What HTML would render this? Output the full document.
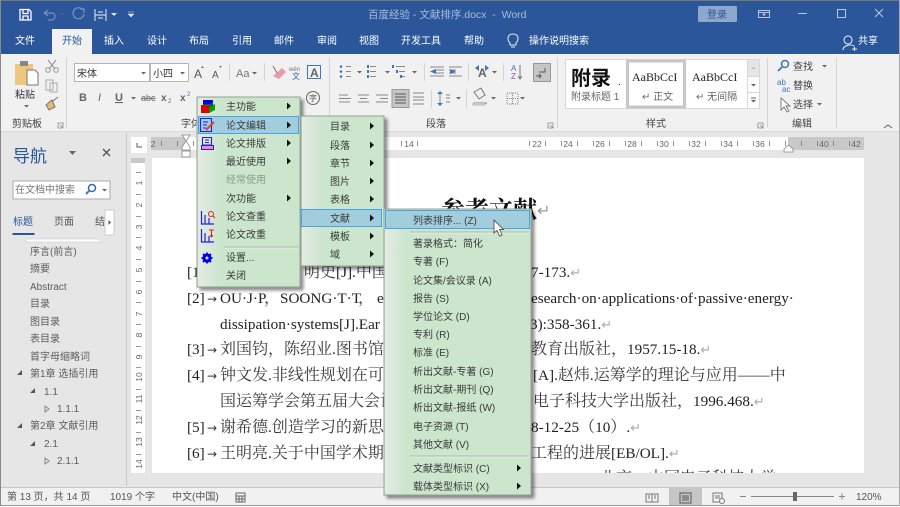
<!DOCTYPE html>
<html lang="zh"><head><meta charset="utf-8"><title>百度经验 - 文献排序.docx - Word</title>
<style>
html,body{margin:0;padding:0;background:#e6e6e6;width:900px;height:507px;overflow:hidden}
svg{display:block;position:absolute;left:0;top:0;filter:blur(.3px)}
text{font-family:"Liberation Sans","Noto Sans CJK SC",sans-serif;font-size:10px;fill:#444}
.w{fill:#fff}.t{fill:#d8e2f0}.m{fill:#3a3a3a;font-size:10px}.n{fill:#5c5c5c;font-size:10px}
.d{font-family:"Liberation Serif","Noto Serif CJK SC",serif;font-size:16px;fill:#3a3a3a}
.l{font-family:"Liberation Serif",serif;font-size:15.2px;fill:#222}
.a{font-family:"DejaVu Sans",sans-serif;font-size:12px;fill:#333}
.r{fill:#aaa;font-size:13px;font-family:"DejaVu Sans",sans-serif}
.u{font-size:8.5px;fill:#666;text-anchor:middle}
.s{font-size:10px;fill:#555}
.b{font-family:"Liberation Serif","Noto Serif CJK SC",serif;font-weight:bold;font-size:24px;fill:#111}
.ic{stroke:#666;stroke-width:1;fill:none}
</style></head><body>
<svg width="900" height="507" viewBox="0 0 900 507" xmlns="http://www.w3.org/2000/svg">
<defs>
<linearGradient id="g" x1="0" x2="1" y1="0" y2="0"><stop offset="0" stop-color="#e4ebe4"/><stop offset="1" stop-color="#cfe5d1"/></linearGradient>
<filter id="sh" x="-10%" y="-10%" width="125%" height="125%"><feDropShadow dx="3" dy="3" stdDeviation="1.6" flood-color="#000" flood-opacity=".45"/></filter>
<path id="ar" d="M0 -3.5L4 0L0 3.5Z" fill="#111"/>
<path id="dd" d="M0 0H5L2.5 2.5Z" fill="#666"/>
</defs>
<!-- base -->
<rect width="900" height="507" fill="#e6e6e6"/>
<rect x="0" y="0" width="900" height="54" fill="#2b579a"/>
<rect x="0" y="54" width="900" height="78" fill="#f1f1f1"/>
<rect x="0" y="131" width="900" height="1" fill="#dadada"/>
<!-- QAT -->
<g fill="none" stroke="#fff" stroke-width="1.3">
<path d="M20 9.5H29L31 11.5V20H20Z"/><path d="M23 10V13.500H28V10M23 20V16H28V20"/>
</g>
<path d="M44 13H52C56 13 56 19 52 20H48M44 13L48 10M44 13L48 16" fill="none" stroke="#7390bd" stroke-width="1.3"/>
<use href="#dd" x="60" y="13" opacity=".6"/>
<path d="M83 10A5.5 5.5 0 1 0 84 14M80 9H84V13" fill="none" stroke="#7390bd" stroke-width="1.3"/>
<path d="M95 9V21M106 9V21M95 15H106M98 12H103M98 18H103" fill="none" stroke="#c5d3e8" stroke-width="1.2"/>
<path d="M111 13H117L114 16Z" fill="#dfe7f2"/>
<path d="M128 12H134M128 14H134L131 17Z" fill="#dfe7f2" stroke="#dfe7f2" stroke-width=".5"/>
<text x="368" y="18" style="fill:#a8bcd9;font-size:10.5px">百度经验 - 文献排序.docx&#160; - &#160;Word</text>
<!-- title right -->
<rect x="698" y="6" width="39" height="16" rx="1" fill="#8ea7cc"/>
<text x="707" y="18" style="fill:#2b579a;font-size:10px">登录</text>
<path d="M758.5 10.5H769.5V17.5H758.5ZM758.5 12.5H769.5M764 13V16M762.5 14.5H765.5" fill="none" stroke="#b8c8e0"/>
<path d="M798 13.5H807" stroke="#b8c8e0" stroke-width="1"/>
<rect x="837.5" y="9.5" width="8" height="8" fill="none" stroke="#b8c8e0"/>
<path d="M875 9L883 17M883 9L875 17" stroke="#b8c8e0" stroke-width="1"/>
<!-- tabs -->
<rect x="52" y="29" width="40" height="25" fill="#f1f1f1"/>
<g class="t">
<text class="w" x="15" y="44">文件</text>
<text x="62" y="44" style="fill:#2b579a">开始</text>
<text class="w" x="104" y="44">插入</text>
<text class="w" x="147" y="44">设计</text>
<text class="w" x="189" y="44">布局</text>
<text class="w" x="232" y="44">引用</text>
<text class="w" x="274" y="44">邮件</text>
<text class="w" x="317" y="44">审阅</text>
<text class="w" x="359" y="44">视图</text>
<text class="w" x="401" y="44">开发工具</text>
<text class="w" x="464" y="44">帮助</text>
<text class="w" x="529" y="44">操作说明搜索</text>
<text class="w" x="858" y="44">共享</text>
</g>
<path d="M510 43C507 40 507 34 513 34C519 34 519 40 516 43V45H510ZM511 47H515" fill="none" stroke="#e8eef6" stroke-width="1"/>
<path d="M848 36a4 4 0 1 0 .1 0M843 50C843 45 852 44 854 46M852 49H857M854.500 46.500V51" fill="none" stroke="#e8eef6" stroke-width="1"/>
<!-- clipboard -->
<path d="M15 64H33V85H15Z" fill="#eec77f"/><rect x="20" y="61" width="8" height="5" fill="#888"/>
<path d="M27 70H35L38 73V85H27Z" fill="#fff" stroke="#777"/>
<text x="15" y="98" style="fill:#333">粘贴</text>
<use href="#dd" x="24" y="105"/>
<path d="M48 60L55 69M56 60L49 69" stroke="#9a9a9a" stroke-width="1.2"/><circle cx="48" cy="70" r="2.300" fill="none" stroke="#9a9a9a"/><circle cx="56" cy="70" r="2.300" fill="none" stroke="#9a9a9a"/>
<path d="M46 80H53V90H46ZM50 83H57V92H50Z" fill="#f1f1f1" stroke="#aaa"/>
<path d="M46 105L52 100L55 107L49 110ZM53 101L58 97" fill="#e8bb6a" stroke="#777"/>
<text x="12" y="127" style="fill:#444">剪贴板</text>
<path d="M58 123H63V128H58ZM60 125L63 128" fill="none" stroke="#888" stroke-width=".8"/>
<rect x="66" y="58" width="1" height="70" fill="#d4d4d4"/>
<!-- font -->
<rect x="74.500" y="63.500" width="75" height="18" fill="#fff" stroke="#b5b5b5"/>
<rect x="150.500" y="63.500" width="38" height="18" fill="#fff" stroke="#b5b5b5"/>
<text x="77" y="77" style="fill:#333">宋体</text><text x="153" y="77" style="fill:#333">小四</text>
<use href="#dd" x="141" y="72"/><use href="#dd" x="180" y="72"/>
<text x="194" y="78" style="font-size:12px;fill:#555">A</text><text x="212" y="78" style="font-size:10px;fill:#555">A</text>
<path d="M201 68L204 68L202.500 66ZM219 66L222 66L220.500 68Z" fill="#3f76b8"/>
<rect x="229" y="63" width="1" height="18" fill="#d4d4d4"/>
<text x="236" y="77" style="font-size:11px;fill:#777">Aa</text><use href="#dd" x="252" y="72"/>
<rect x="264" y="63" width="1" height="18" fill="#d4d4d4"/>
<path d="M273 76L282 68L286 72L279 79Z" fill="#ea9aa5"/><path d="M273 66L277 73" stroke="#777"/>
<text x="289" y="71" style="font-size:6px;fill:#777">wén</text><text x="292" y="79" style="font-size:8px;fill:#2b6cb0">文</text>
<rect x="307.500" y="65.500" width="13" height="13" fill="none" stroke="#3f76b8"/><text x="310" y="77" style="font-size:12px;font-weight:bold;fill:#666">A</text>
<text x="79" y="101" style="font-weight:bold;font-size:11px;fill:#666">B</text>
<text x="98" y="101" style="font-style:italic;font-size:11px;fill:#666">I</text>
<text x="115" y="101" style="font-weight:bold;font-size:11px;fill:#666;text-decoration:underline">U</text>
<use href="#dd" x="131" y="97"/>
<text x="141" y="101" style="font-size:9px;fill:#666;text-decoration:line-through">abc</text>
<text x="161" y="101" style="font-weight:bold;font-size:10px;fill:#666">x</text><text x="168" y="103" style="font-size:6px;fill:#3f76b8">2</text>
<text x="180" y="101" style="font-weight:bold;font-size:10px;fill:#666">x</text><text x="187" y="96" style="font-size:6px;fill:#3f76b8">2</text>
<text x="181" y="127" style="fill:#444">字体</text>
<circle cx="313" cy="98" r="6.500" fill="none" stroke="#666"/><text x="309" y="101" style="font-size:8px;fill:#555">字</text>
<rect x="329" y="58" width="1" height="70" fill="#d4d4d4"/>
<!-- paragraph -->
<g stroke="#888" fill="none">
<path d="M346 66.500H351M346 71.500H351M346 76.500H351M370 66.500H376M370 71.500H376M370 76.500H376M396 66.500H405M399 71.500H405M402 76.500H405"/>
<path d="M430 67H444M436 70H444M436 73H444M430 76H444M449 67H462M449 70H456M449 73H456M449 76H462"/>
<path d="M339 98.500H351M339 95H348M339 102H350M358 95H369M360 98.500H367M358 102H369M376 95H388M380 98.500H388M376 102H388"/>
<path d="M394 95H406M394 98H406M394 101H406M394 104H406"/>
<path d="M413 93H424M413 97H424M413 100H424M413 104H424"/>
<path d="M446 95H450M446 98H450M446 102H450M440 94V104"/>
<path d="M507 93H518V104H507ZM512.500 93V104M507 98.500H518" stroke-dasharray="1 1"/>
</g>
<g fill="#3f76b8"><circle cx="341" cy="66.500" r="1.300"/><circle cx="341" cy="71.500" r="1.300"/><circle cx="341" cy="76.500" r="1.300"/>
<rect x="367" y="65" width="2" height="3"/><rect x="367" y="70" width="2" height="3"/><rect x="367" y="75" width="2" height="3"/>
<rect x="392" y="65" width="2" height="3"/><rect x="396" y="70" width="2" height="3"/><rect x="400" y="75" width="2" height="3"/>
<path d="M430 71.500L436 69V74ZM456 71.500L450 69V74Z"/><path d="M475 68L479 65V71ZM489 68L485 65V71Z"/><path d="M440 91L437 94H443ZM440 106L437 103H443Z"/></g>
<use href="#dd" x="357" y="71"/><use href="#dd" x="385" y="71"/><use href="#dd" x="412" y="71"/><use href="#dd" x="492" y="71"/><use href="#dd" x="456" y="97"/><use href="#dd" x="491" y="97"/><use href="#dd" x="520" y="97"/>
<rect x="424" y="63" width="1" height="18" fill="#d4d4d4"/><rect x="468" y="63" width="1" height="18" fill="#d4d4d4"/><rect x="503" y="63" width="1" height="18" fill="#d4d4d4"/>
<rect x="431" y="90" width="1" height="18" fill="#d4d4d4"/><rect x="466" y="90" width="1" height="18" fill="#d4d4d4"/>
<text x="478" y="77" style="font-size:12px;font-weight:bold;fill:#666">A</text>
<text x="511" y="71" style="font-size:8px;fill:#3f76b8">A</text><text x="511" y="79" style="font-size:8px;fill:#a040b0">Z</text><path d="M520 65V78M518 76L520 79L522 76" stroke="#777" fill="none"/>
<rect x="533.500" y="63.500" width="17" height="18" fill="#c6c6c6" stroke="#999"/>
<path d="M545 68V72H539M541 76H536M539 74L541 76L539 78" fill="none" stroke="#555"/>
<rect x="392" y="89.500" width="17" height="18" fill="#c6c6c6" stroke="#999"/>
<path d="M395 94H406M395 97H406M395 100H406M395 103H406" stroke="#555"/>
<path d="M474 92L481 88L485 95L479 99ZM474 103H487" fill="#eee" stroke="#777"/><rect x="473" y="103" width="12" height="2" fill="#ddd" stroke="#888" stroke-width=".5"/>
<text x="426" y="127" style="fill:#444">段落</text>
<path d="M548 123H553V128H548ZM550 125L553 128" fill="none" stroke="#888" stroke-width=".8"/>
<rect x="557" y="58" width="1" height="70" fill="#d4d4d4"/>
<!-- styles -->
<rect x="565.500" y="59.500" width="194" height="49" fill="#fff" stroke="#d8d8d8"/>
<text x="571" y="85" style="font-size:20px;font-weight:bold;fill:#111">附录</text><text x="618" y="85" style="font-size:10px;fill:#111">.</text>
<text x="571" y="100" style="fill:#666">附录标题 1</text>
<rect x="627.500" y="61" width="57" height="46" fill="#fff" stroke="#c6c6c6" stroke-width="3"/>
<text x="632" y="81" style="font-family:'Liberation Serif',serif;font-size:12px;fill:#222">AaBbCcI</text>
<text x="692" y="81" style="font-family:'Liberation Serif',serif;font-size:12px;fill:#222">AaBbCcI</text>
<text x="642" y="100" style="fill:#666">↵ 正文</text><text x="696" y="100" style="fill:#666">↵ 无间隔</text>
<rect x="747.500" y="59.500" width="12" height="17" fill="#e6e6e6" stroke="#d8d8d8"/><rect x="747.500" y="76.500" width="12" height="16" fill="#fff" stroke="#d8d8d8"/><rect x="747.500" y="92.500" width="12" height="16" fill="#fff" stroke="#d8d8d8"/>
<path d="M751 69H756L753.500 67Z" fill="#bbb"/><use href="#dd" x="751" y="84"/><use href="#dd" x="751" y="100"/><path d="M751 98H756" stroke="#666"/>
<text x="646" y="127" style="fill:#444">样式</text>
<path d="M758 123H763V128H758ZM760 125L763 128" fill="none" stroke="#888" stroke-width=".8"/>
<rect x="767" y="58" width="1" height="70" fill="#d4d4d4"/>
<!-- editing -->
<circle cx="785" cy="64" r="3.500" fill="none" stroke="#3f76b8" stroke-width="1.5"/><path d="M782 67L778 71" stroke="#3f76b8" stroke-width="1.800"/>
<text x="793" y="70" style="fill:#444">查找</text><use href="#dd" x="822" y="65"/>
<text x="777" y="85" style="font-size:8px;fill:#3f76b8">ab</text><text x="782" y="92" style="font-size:8px;fill:#3f76b8">ac</text>
<text x="793" y="89" style="fill:#444">替换</text>
<path d="M781 98V110L784 107L787 112L789 111L786 106H790Z" fill="#fff" stroke="#777" stroke-width=".9"/>
<text x="793" y="108" style="fill:#444">选择</text><use href="#dd" x="817" y="103"/>
<text x="792" y="127" style="fill:#444">编辑</text>
<rect x="836" y="58" width="1" height="70" fill="#d4d4d4"/>
<path d="M884 128L888 125L892 128" fill="none" stroke="#666"/>
<!-- nav pane -->
<rect x="126" y="133" width="1" height="353" fill="#c8c8c8"/>
<text x="13" y="162" style="font-size:17px;fill:#2b579a">导航</text>
<path d="M69 151H76L72.500 155Z" fill="#666"/>
<path d="M103 149L110 156M110 149L103 156" stroke="#555" stroke-width="1.4"/>
<rect x="13" y="181" width="97" height="18" fill="#fff" stroke="#aaa"/>
<text x="15" y="193" style="fill:#777">在文档中搜索</text>
<circle cx="92" cy="188" r="3.500" fill="none" stroke="#2b6cb0" stroke-width="1.500"/><path d="M89 191L86 194" stroke="#2b6cb0" stroke-width="1.800"/>
<path d="M102 189H107L104.500 191.500Z" fill="#666"/>
<text x="13" y="225" style="fill:#2b579a">标题</text><text x="54" y="225" style="fill:#555">页面</text><text x="95" y="225" style="fill:#555">结</text>
<rect x="12.500" y="233" width="22" height="2" fill="#2b579a"/>
<rect x="105" y="210" width="9" height="25" fill="#fff" stroke="#ccc"/><path d="M108.500 220V225L111 222.500Z" fill="#555"/>
<rect x="26" y="239" width="74" height="3" fill="#fff" stroke="#ccc" stroke-width=".6"/>
<g class="nv">
<text class="n" x="30" y="255">序言(前言)</text>
<text class="n" x="30" y="272">摘要</text>
<text class="n" x="30" y="290">Abstract</text>
<text class="n" x="30" y="307">目录</text>
<text class="n" x="30" y="325">图目录</text>
<text class="n" x="30" y="342">表目录</text>
<text class="n" x="30" y="360">首字母缩略词</text>
<text class="n" x="30" y="377">第1章 选插引用</text>
<text class="n" x="44" y="395">1.1</text>
<text class="n" x="57" y="412">1.1.1</text>
<text class="n" x="30" y="429">第2章 文献引用</text>
<text class="n" x="44" y="447">2.1</text>
<text class="n" x="57" y="464">2.1.1</text>
</g>
<path d="M17 375L22 370V375ZM30 393L35 388V393ZM17 428L22 423V428ZM30 446L35 441V446Z" fill="#555"/>
<path d="M45 406L49 409L45 412ZM45 458L49 461L45 464Z" fill="none" stroke="#888"/>
<!-- rulers -->
<rect x="131" y="137" width="16" height="16" fill="#fff"/><path d="M137 143V147H142" stroke="#555" fill="none"/>
<rect x="151" y="137" width="713" height="13" fill="#fff"/>
<rect x="151" y="137" width="34" height="13" fill="#c8c8c8"/><rect x="788" y="137" width="76" height="13" fill="#c8c8c8"/>
<g class="ru">
<text class="u" x="153" y="147">2</text>
<text class="u" x="409" y="147">14</text><text class="u" x="537" y="147">22</text><text class="u" x="568" y="147">24</text><text class="u" x="600" y="147">26</text><text class="u" x="632" y="147">28</text><text class="u" x="664" y="147">30</text><text class="u" x="696" y="147">32</text><text class="u" x="728" y="147">34</text><text class="u" x="760" y="147">36</text><text class="u" x="824" y="147">40</text><text class="u" x="856" y="147">42</text>
</g>
<path d="M161.500 141V146M177.500 141V146M193.500 141V146M401.500 141V146M417.500 141V146M529.500 141V146M545.500 141V146M561.500 141V146M577.500 141V146M593.500 141V146M609.500 141V146M625.500 141V146M641.500 141V146M657.500 141V146M673.500 141V146M689.500 141V146M705.500 141V146M721.500 141V146M737.500 141V146M753.500 141V146M769.500 141V146M785.500 141V146M801.500 141V146M817.500 141V146M833.500 141V146M849.500 141V146" stroke="#777" stroke-width=".8"/>
<path d="M182 135H190L186 141L190 147V150H182V147L186 141Z" fill="#fff" stroke="#888" stroke-width=".8"/><rect x="182" y="151" width="8" height="6" fill="#fff" stroke="#888" stroke-width=".8"/>
<path d="M784 152V149L788.500 145L793 149V152Z" fill="#fff" stroke="#888" stroke-width=".8"/>
<path d="M165 160H190M790 160H813" stroke="#aaa"/>
<rect x="131" y="158" width="14" height="315" fill="#fff"/><rect x="131" y="158" width="14" height="5" fill="#c8c8c8"/>
<g style="font-size:8px">
<text class="u" transform="translate(142 183) rotate(-90)">1</text>
<text class="u" transform="translate(142 205) rotate(-90)">2</text>
<text class="u" transform="translate(142 227) rotate(-90)">3</text>
<text class="u" transform="translate(142 248) rotate(-90)">4</text>
<text class="u" transform="translate(142 270) rotate(-90)">5</text>
<text class="u" transform="translate(142 292) rotate(-90)">6</text>
<text class="u" transform="translate(142 314) rotate(-90)">7</text>
<text class="u" transform="translate(142 335) rotate(-90)">8</text>
<text class="u" transform="translate(142 357) rotate(-90)">9</text>
<text class="u" transform="translate(142 377) rotate(-90)">10</text>
<text class="u" transform="translate(142 399) rotate(-90)">11</text>
<text class="u" transform="translate(142 420) rotate(-90)">12</text>
<text class="u" transform="translate(142 442) rotate(-90)">13</text>
<text class="u" transform="translate(142 464) rotate(-90)">14</text>
</g>
<path d="M136 172.500H141M136 194.500H141M136 216.500H141M136 237.500H141M136 259.500H141M136 281.500H141M136 302.500H141M136 324.500H141M136 346.500H141M136 367.500H141M136 389.500H141M136 410.500H141M136 432.500H141M136 454.500H141" stroke="#777" stroke-width=".8"/>
<!-- page -->
<rect x="152" y="158" width="712" height="315" fill="#fff"/>
<text class="b" x="441" y="218">参考文献</text>
<text class="r" x="537" y="216" style="font-size:16px;fill:#999">↵</text>
<g>
<text class="d" x="187" y="277"><tspan class="l">[1]</tspan></text>
<text class="d" x="304" y="277">明史<tspan class="l">[J].</tspan>中国</text>
<text class="l" x="531" y="277">7-173.<tspan class="r">↵</tspan></text>

<text class="d" x="187" y="303"><tspan class="l">[2]</tspan><tspan class="a" x="207">→</tspan><tspan class="l" x="220">OU·J·P</tspan><tspan x="264">，</tspan><tspan class="l" x="280">SOONG·T·T</tspan><tspan x="358">，</tspan><tspan class="l" x="377">e</tspan></text>
<text class="l" x="531" y="303">esearch·on·applications·of·passive·energy·</text>

<text class="l" x="220" y="329">dissipation·systems[J].Ear</text>
<text class="l" x="530" y="329">3):358-361.<tspan class="r">↵</tspan></text>

<text class="d" x="187" y="354"><tspan class="l">[3]</tspan><tspan class="a" x="207">→</tspan><tspan x="220">刘国钧，陈绍业</tspan><tspan class="l">.</tspan>图书馆</text>
<text class="d" x="531" y="354">教育出版社，<tspan class="l">1957.15-18.</tspan><tspan class="r">↵</tspan></text>

<text class="d" x="187" y="380"><tspan class="l">[4]</tspan><tspan class="a" x="207">→</tspan><tspan x="220">钟文发</tspan><tspan class="l">.</tspan>非线性规划在可</text>
<text class="d" x="533" y="380"><tspan class="l">[A].</tspan>赵炜<tspan class="l">.</tspan>运筹学的理论与应用——中</text>

<text class="d" x="220" y="406">国运筹学会第五届大会论</text>
<text class="d" x="533" y="406">电子科技大学出版社，<tspan class="l">1996.468.</tspan><tspan class="r">↵</tspan></text>

<text class="d" x="187" y="432"><tspan class="l">[5]</tspan><tspan class="a" x="207">→</tspan><tspan x="220">谢希德</tspan><tspan class="l">.</tspan>创造学习的新思</text>
<text class="d" x="531" y="432"><tspan class="l">8-12-25</tspan>（<tspan class="l">10</tspan>）<tspan class="l">.</tspan><tspan class="r">↵</tspan></text>

<text class="d" x="187" y="458"><tspan class="l">[6]</tspan><tspan class="a" x="207">→</tspan><tspan x="220">王明亮</tspan><tspan class="l">.</tspan>关于中国学术期</text>
<text class="d" x="531" y="458">工程的进展<tspan class="l">[EB/OL].</tspan><tspan class="r">↵</tspan></text>

<text class="l" x="240" y="483">http://www.cajcd.cn/pub/wml.txt/980810-2.html</text>
<text class="d" x="600" y="483">北京：中国电子科技大学</text>
</g>
<rect x="127" y="473" width="773" height="14" fill="#e6e6e6"/>
<!-- status bar -->
<rect x="0" y="487" width="900" height="18" fill="#f1f1f1"/>
<rect x="0" y="487" width="900" height="1" fill="#c8c8c8"/>
<rect x="0" y="505" width="900" height="1" fill="#9a9a9a"/><rect x="0" y="506" width="900" height="1" fill="#fff"/>
<text class="s" x="7" y="500">第 13 页，共 14 页</text>
<text class="s" x="110" y="500">1019 个字</text>
<text class="s" x="172" y="500">中文(中国)</text>
<path d="M236 493H245V502H236ZM236 496H245M239 496V502M242 496V502M236 499H245" fill="none" stroke="#666"/>
<rect x="669" y="488" width="33" height="17" fill="#c6c6c6"/>
<path d="M646 494H658V502H646ZM652 494V502M648 496H650M648 498H650M654 496H656M654 498H656" fill="none" stroke="#777"/>
<path d="M680 493H691V503H680ZM682 496H689M682 498H689M682 500H689" fill="none" stroke="#555"/>
<path d="M713 493H722V502H713ZM715 496H720M715 498H720" fill="none" stroke="#777"/><circle cx="722" cy="501" r="2.500" fill="#f1f1f1" stroke="#777"/>
<path d="M740 496.500H746M751 496.500H834M839 496.500H845M842 493.500V499.500" stroke="#888"/>
<rect x="793" y="492" width="4" height="9" fill="#666"/>
<text class="s" x="856" y="500">120%</text>
<!-- left outer border -->
<rect x="0" y="0" width="900" height="1" fill="#777"/><rect x="0" y="0" width="1" height="506" fill="#8a8a8a"/><rect x="899" y="0" width="1" height="506" fill="#aaa"/>
<!-- Menu 1 -->
<g filter="url(#sh)"><rect x="197" y="97" width="103" height="190" fill="#cbe6cd" stroke="#94a394"/></g>
<rect x="198" y="98" width="20" height="188" fill="url(#g)"/>
<rect x="198.500" y="116.500" width="100" height="17" fill="#a2cddc" stroke="#4aa3ea"/>
<g>
<text class="m" x="226" y="110">主功能</text>
<text class="m" x="226" y="129">论文编辑</text>
<text class="m" x="226" y="147">论文排版</text>
<text class="m" x="226" y="165">最近使用</text>
<text class="m" x="226" y="183" style="fill:#8b9b8c">经常使用</text>
<text class="m" x="226" y="202">次功能</text>
<text class="m" x="226" y="220">论文查重</text>
<text class="m" x="226" y="238">论文改重</text>
<text class="m" x="226" y="261">设置...</text>
<text class="m" x="226" y="279">关闭</text>
</g>
<g><use href="#ar" x="287" y="106"/><use href="#ar" x="287" y="125"/><use href="#ar" x="287" y="143"/><use href="#ar" x="287" y="161"/><use href="#ar" x="287" y="198"/></g>
<path d="M224 247H299" stroke="#a9b8aa"/><path d="M224 248H299" stroke="#e4f2e4"/>
<!-- menu1 icons -->
<path d="M203 100H213V107H203Z" fill="#0000e0"/><path d="M201 105H210V113H201Z" fill="#e00000"/><path d="M209 113L215 110V104L209 107Z" fill="#00a000"/><path d="M203 105H210L213 103" fill="none" stroke="#00a000"/>
<path d="M200.500 118.500H211.500V131.500H200.500ZM203 122H208M203 125H207M203 128H206" fill="none" stroke="#2020e0" stroke-width="1.100"/><path d="M206 130L214 122" stroke="#e04020" stroke-width="2"/>
<path d="M202.500 137.500H211.500V145H202.500ZM205 140H209M205 142.500H209" fill="none" stroke="#2020e0" stroke-width="1.100"/><rect x="201.500" y="145.500" width="12" height="4" fill="#ff9090" stroke="#2020e0"/>
<path d="M201.500 211V224H214M205 215V224M209 218V224" fill="none" stroke="#2020e0" stroke-width="1.200"/><circle cx="211" cy="214" r="2.500" fill="none" stroke="#e02020"/><path d="M213 216L215 218" stroke="#e02020"/>
<path d="M201.500 229V242H214M205 233V242M209 236V242" fill="none" stroke="#2020e0" stroke-width="1.200"/><path d="M209 230H214M211.500 230V237M210 235L211.500 237L213 235" fill="none" stroke="#e02020"/>
<circle cx="207" cy="258" r="3.500" fill="none" stroke="#0000e0" stroke-width="2.200"/><path d="M207 252.500V263.500M201.500 258H212.500M203 254L211 262M211 254L203 262" stroke="#0000e0" stroke-width="1.700"/><circle cx="207" cy="258" r="1.500" fill="#cfe5d1"/>
<!-- Menu 2 -->
<g filter="url(#sh)"><rect x="301" y="116" width="83" height="150" fill="#cbe6cd" stroke="#94a394"/></g>
<rect x="302" y="117" width="19" height="148" fill="url(#g)"/>
<rect x="301.500" y="209.500" width="80" height="17" fill="#a2cddc" stroke="#4aa3ea"/>
<g>
<text class="m" x="330" y="130">目录</text><text class="m" x="330" y="149">段落</text><text class="m" x="330" y="167">章节</text><text class="m" x="330" y="185">图片</text><text class="m" x="330" y="203">表格</text><text class="m" x="330" y="222">文献</text><text class="m" x="330" y="240">模板</text><text class="m" x="330" y="258">域</text>
</g>
<g><use href="#ar" x="370" y="126"/><use href="#ar" x="370" y="145"/><use href="#ar" x="370" y="163"/><use href="#ar" x="370" y="181"/><use href="#ar" x="370" y="199"/><use href="#ar" x="370" y="218"/><use href="#ar" x="370" y="236"/><use href="#ar" x="370" y="254"/></g>
<!-- Menu 3 -->
<g filter="url(#sh)"><rect x="384" y="209" width="147" height="286" fill="#cbe6cd" stroke="#94a394"/></g>
<rect x="385" y="210" width="19" height="284" fill="url(#g)"/>
<rect x="385.500" y="210.500" width="144" height="18" fill="#a2cddc" stroke="#4aa3ea"/>
<path d="M410 232H529M410 456H529" stroke="#a9b8aa"/><path d="M410 233H529M410 457H529" stroke="#e4f2e4"/>
<g>
<text class="m" x="413" y="224">列表排序... (Z)</text>
<text class="m" x="413" y="247">著录格式：简化</text>
<text class="m" x="413" y="265">专著 (F)</text>
<text class="m" x="413" y="284">论文集/会议录 (A)</text>
<text class="m" x="413" y="302">报告 (S)</text>
<text class="m" x="413" y="320">学位论文 (D)</text>
<text class="m" x="413" y="338">专利 (R)</text>
<text class="m" x="413" y="356">标准 (E)</text>
<text class="m" x="413" y="375">析出文献-专著 (G)</text>
<text class="m" x="413" y="393">析出文献-期刊 (Q)</text>
<text class="m" x="413" y="411">析出文献-报纸 (W)</text>
<text class="m" x="413" y="430">电子资源 (T)</text>
<text class="m" x="413" y="448">其他文献 (V)</text>
<text class="m" x="413" y="472">文献类型标识 (C)</text>
<text class="m" x="413" y="490">载体类型标识 (X)</text>
</g>
<use href="#ar" x="517" y="468"/><use href="#ar" x="517" y="486"/>
<!-- cursor -->
<path d="M494 220V233L497 230.500L499.500 236L502 235L499.500 229.500H503.500Z" fill="#fff" stroke="#555" stroke-width=".9"/>
</svg>
</body></html>
